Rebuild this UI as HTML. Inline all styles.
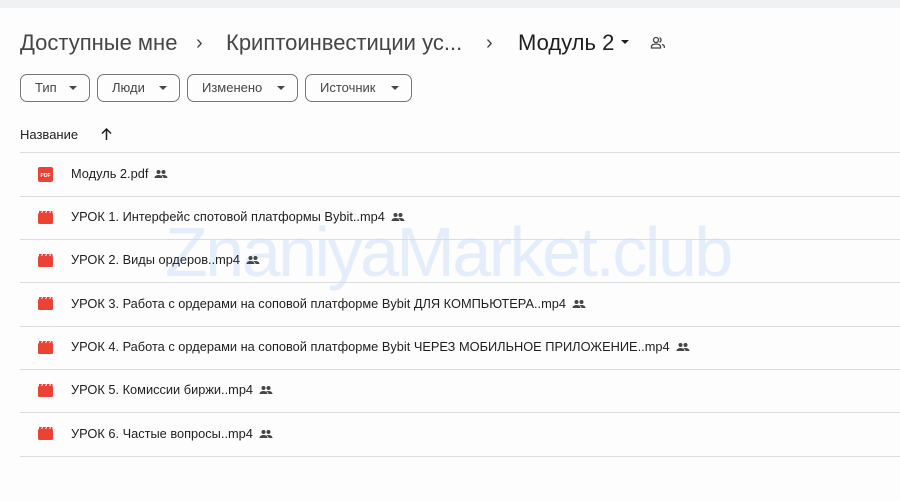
<!DOCTYPE html>
<html><head><meta charset="utf-8"><style>
*{margin:0;padding:0;box-sizing:border-box}
body{width:900px;height:501px;overflow:hidden;background:#fdfdfd;font-family:"Liberation Sans","DejaVu Sans",sans-serif;color:#1f1f1f;position:relative}
.top{position:absolute;left:0;top:0;width:900px;height:8px;background:#f0f1f3}
.bc{position:absolute;top:28px;left:20px;font-size:22px;color:#444746;white-space:nowrap;height:30px;line-height:30px}
.bc span{position:absolute;top:0}
.chip{position:absolute;top:74px;height:28px;border:1px solid #747775;border-radius:7px;font-size:13px;color:#444746;line-height:26px;padding-left:14px}
.chip:after{content:"";position:absolute;right:12px;top:11px;border-left:4px solid transparent;border-right:4px solid transparent;border-top:4px solid #444746}
.hdr{position:absolute;top:127px;left:20px;font-size:13px;color:#1f1f1f}
.line{position:absolute;left:20px;width:880px;height:1px;background:#dadce0}
.row{position:absolute;left:0;height:43px;width:900px}
.row .t{position:absolute;left:71px;top:13px;font-size:12.8px;line-height:16px;white-space:nowrap;color:#1f1f1f}
.row .t svg{margin-left:6px;vertical-align:-1px}
.wm{position:absolute;left:165px;top:212px;font-size:70px;color:#e3edfc;letter-spacing:-2.5px;white-space:nowrap;line-height:80px}
</style></head><body>
<div class="top"></div>
<div class="wm">ZnaniyaMarket.club</div>
<div class="bc">
<span style="left:0">Доступные мне</span>
<span style="left:176px;font-size:20px">›</span>
<span style="left:206px">Криптоинвестиции ус...</span>
<span style="left:466px;font-size:20px">›</span>
<span style="left:498px;color:#1f1f1f">Модуль 2</span>
<span style="left:601px;top:12px;width:0;height:0;border-left:4px solid transparent;border-right:4px solid transparent;border-top:4px solid #1f1f1f"></span>
<svg style="position:absolute;left:630px;top:7px" width="16" height="16" viewBox="0 0 16 16" fill="none" stroke="#444746" stroke-width="1.3"><circle cx="6" cy="5" r="2.5"/><path d="M1.5 13v-1.5c0-1.5 2-2.5 4.5-2.5s4.5 1 4.5 2.5V13z"/><path d="M9.5 2.7a2.5 2.5 0 0 1 0 4.6M12 9.5c1.3.4 2.3 1.1 2.3 2V13"/></svg>
</div>
<div class="chip" style="left:20px;width:70px">Тип</div>
<div class="chip" style="left:97px;width:83px">Люди</div>
<div class="chip" style="left:187px;width:111px">Изменено</div>
<div class="chip" style="left:305px;width:107px">Источник</div>
<div class="hdr">Название</div>
<svg style="position:absolute;left:100px;top:127px" width="13" height="14" viewBox="0 0 13 14" fill="none" stroke="#1f1f1f" stroke-width="1.5"><path d="M6.5 13V2M2 6.5l4.5-4.5 4.5 4.5"/></svg>

<div class="line" style="top:152px"></div>
<div class="line" style="top:196px"></div>
<div class="line" style="top:239px"></div>
<div class="line" style="top:282px"></div>
<div class="line" style="top:326px"></div>
<div class="line" style="top:369px"></div>
<div class="line" style="top:412px"></div>
<div class="line" style="top:456px"></div>

<svg style="position:absolute;left:0;top:0" width="900" height="501">
<defs>
<g id="v"><rect x="0" y="2" width="15" height="11" rx="1.5" fill="#ea4335"/><path d="M1 0h3l-1 2.5h-2zM5 0h3l-1 2.5h-3zM9 0h3l-1 2.5h-3zM13 0h1.5v2.5h-2.5z" fill="#ea4335"/></g>
</defs>
<rect x="38" y="167" width="15" height="15" rx="2" fill="#ea4335"/><text x="45.5" y="177" font-size="5" fill="#fff" text-anchor="middle" font-family="Liberation Sans" font-weight="bold">PDF</text>
<use href="#v" x="38" y="211"/>
<use href="#v" x="38" y="254"/>
<use href="#v" x="38" y="297"/>
<use href="#v" x="38" y="341"/>
<use href="#v" x="38" y="384"/>
<use href="#v" x="38" y="427"/>
</svg>

<div class="row" style="top:153px"><div class="t">Модуль 2.pdf<svg width="14" height="10" viewBox="0 0 13 10"><g fill="#444746"><circle cx="4" cy="3" r="2"/><circle cx="9" cy="3" r="2"/><path d="M0 9c0-2 2-3 4-3s4 1 4 3zM6.5 6.3c.8-.2 1.7-.3 2.5-.3 2 0 4 1 4 3H9c0-1-.8-2-2.5-2.7z"/></g></svg></div></div>
<div class="row" style="top:196px"><div class="t">УРОК 1. Интерфейс спотовой платформы Bybit..mp4<svg width="14" height="10" viewBox="0 0 13 10"><g fill="#444746"><circle cx="4" cy="3" r="2"/><circle cx="9" cy="3" r="2"/><path d="M0 9c0-2 2-3 4-3s4 1 4 3zM6.5 6.3c.8-.2 1.7-.3 2.5-.3 2 0 4 1 4 3H9c0-1-.8-2-2.5-2.7z"/></g></svg></div></div>
<div class="row" style="top:239px"><div class="t">УРОК 2. Виды ордеров..mp4<svg width="14" height="10" viewBox="0 0 13 10"><g fill="#444746"><circle cx="4" cy="3" r="2"/><circle cx="9" cy="3" r="2"/><path d="M0 9c0-2 2-3 4-3s4 1 4 3zM6.5 6.3c.8-.2 1.7-.3 2.5-.3 2 0 4 1 4 3H9c0-1-.8-2-2.5-2.7z"/></g></svg></div></div>
<div class="row" style="top:283px"><div class="t">УРОК 3. Работа с ордерами на соповой платформе Bybit ДЛЯ КОМПЬЮТЕРА..mp4<svg width="14" height="10" viewBox="0 0 13 10"><g fill="#444746"><circle cx="4" cy="3" r="2"/><circle cx="9" cy="3" r="2"/><path d="M0 9c0-2 2-3 4-3s4 1 4 3zM6.5 6.3c.8-.2 1.7-.3 2.5-.3 2 0 4 1 4 3H9c0-1-.8-2-2.5-2.7z"/></g></svg></div></div>
<div class="row" style="top:326px"><div class="t">УРОК 4. Работа с ордерами на соповой платформе Bybit ЧЕРЕЗ МОБИЛЬНОЕ ПРИЛОЖЕНИЕ..mp4<svg width="14" height="10" viewBox="0 0 13 10"><g fill="#444746"><circle cx="4" cy="3" r="2"/><circle cx="9" cy="3" r="2"/><path d="M0 9c0-2 2-3 4-3s4 1 4 3zM6.5 6.3c.8-.2 1.7-.3 2.5-.3 2 0 4 1 4 3H9c0-1-.8-2-2.5-2.7z"/></g></svg></div></div>
<div class="row" style="top:369px"><div class="t">УРОК 5. Комиссии биржи..mp4<svg width="14" height="10" viewBox="0 0 13 10"><g fill="#444746"><circle cx="4" cy="3" r="2"/><circle cx="9" cy="3" r="2"/><path d="M0 9c0-2 2-3 4-3s4 1 4 3zM6.5 6.3c.8-.2 1.7-.3 2.5-.3 2 0 4 1 4 3H9c0-1-.8-2-2.5-2.7z"/></g></svg></div></div>
<div class="row" style="top:413px"><div class="t">УРОК 6. Частые вопросы..mp4<svg width="14" height="10" viewBox="0 0 13 10"><g fill="#444746"><circle cx="4" cy="3" r="2"/><circle cx="9" cy="3" r="2"/><path d="M0 9c0-2 2-3 4-3s4 1 4 3zM6.5 6.3c.8-.2 1.7-.3 2.5-.3 2 0 4 1 4 3H9c0-1-.8-2-2.5-2.7z"/></g></svg></div></div>
</body></html>
